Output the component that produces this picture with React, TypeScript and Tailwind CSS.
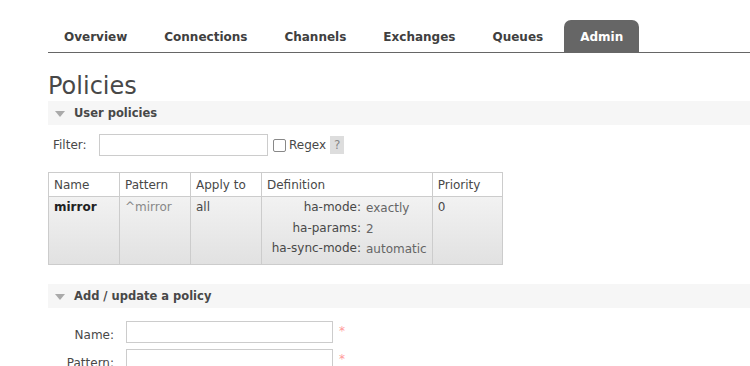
import React from 'react';

const tabs = ['Overview', 'Connections', 'Channels', 'Exchanges', 'Queues', 'Admin'];

const definition: [string, string][] = [
  ['ha-mode', 'exactly'],
  ['ha-params', '2'],
  ['ha-sync-mode', 'automatic'],
];

const SectionHeader = ({ title }: { title: string }) => (
  <div className="flex h-[24px] items-center bg-[#f6f6f6] pl-[7px] pt-[1px]">
    <span className="mr-[9px] h-0 w-0 border-x-[5px] border-t-[6px] border-x-transparent border-t-[#aaaaaa]" />
    <span className="text-[11.5px] font-bold text-[#484848]">{title}</span>
  </div>
);

const App = () => {
  return (
    <div
      className="h-[366px] w-[750px] overflow-hidden bg-white pl-[48px] text-[12px] text-[#484848]"
      style={{ fontFamily: '"DejaVu Sans", Verdana, sans-serif' }}
    >
      {/* nav */}
      <div className="mt-[20px] flex h-[33px] gap-[5px] border-b border-[#666666]">
        {tabs.map(t => (
          <div
            key={t}
            className={
              t === 'Admin'
                ? 'flex h-[32px] items-center rounded-t-[7px] bg-[#666666] px-[16px] pt-[2px] font-bold text-white'
                : 'flex h-[32px] items-center px-[16px] pt-[2px] font-bold text-[#404040]'
            }
          >
            {t}
          </div>
        ))}
      </div>

      <h1 className="mt-[19px] h-[28px] text-[24px] leading-[28px] text-[#484848]">Policies</h1>

      <div className="mt-[1px]">
        <SectionHeader title="User policies" />
      </div>

      {/* filter */}
      <div className="mt-[9px] flex h-[22px] items-center">
        <span className="ml-[5px] w-[46px]">Filter:</span>
        <input className="h-[22px] w-[169px] border border-[#cccccc] outline-none" />
        <span className="ml-[5px] h-[13px] w-[13px] rounded-[2px] border border-[#888888] bg-white" />
        <span className="ml-[3px]">Regex</span>
        <span className="ml-[4px] flex h-[18px] w-[14px] items-center justify-center bg-[#dddddd] text-[#888888]">?</span>
      </div>

      {/* table */}
      <table className="mt-[16px] border-collapse border border-[#cccccc]">
        <thead>
          <tr className="h-[24px] bg-white">
            <th className="w-[71px] border border-[#cccccc] px-[5px] text-left font-normal">Name</th>
            <th className="w-[71px] border border-[#cccccc] px-[5px] text-left font-normal">Pattern</th>
            <th className="w-[71px] border border-[#cccccc] px-[5px] text-left font-normal">Apply to</th>
            <th className="w-[169px] border border-[#cccccc] px-[5px] text-left font-normal">Definition</th>
            <th className="w-[70px] border border-[#cccccc] px-[5px] text-left font-normal">Priority</th>
          </tr>
        </thead>
        <tbody>
          <tr className="h-[68px] bg-linear-to-b from-[#f2f2f2] to-[#e1e1e1] align-top">
            <td className="border border-[#cccccc] px-[5px] pt-[1px] font-bold text-[#222222]">mirror</td>
            <td className="border border-[#cccccc] px-[5px] pt-[1px] text-[#888888]">^mirror</td>
            <td className="border border-[#cccccc] px-[5px] pt-[1px]">all</td>
            <td className="border border-[#cccccc] px-[5px] pt-0">
              <div className="flex flex-col">
                {definition.map(([k, v]) => (
                  <div key={k} className="flex h-[20.5px] items-center">
                    <span className="w-[94px] text-right">{k}:</span>
                    <span className="ml-[5px] mt-[2px] text-[#666666]">{v}</span>
                  </div>
                ))}
              </div>
            </td>
            <td className="border border-[#cccccc] px-[5px] pt-[1px]">0</td>
          </tr>
        </tbody>
      </table>

      <div className="mt-[19px]">
        <SectionHeader title="Add / update a policy" />
      </div>

      {/* form */}
      <div className="mt-[13px] flex flex-col gap-[6px]">
        {['Name:', 'Pattern:'].map(l => (
          <div key={l} className="flex h-[22px] items-start">
            <span className="w-[66px] pt-[5px] text-right leading-[18px]">{l}</span>
            <input className="ml-[12px] h-[22px] w-[207px] border border-[#cccccc] outline-none" />
            <span className="ml-[6px] pt-[1px] text-[#ff9999]">*</span>
          </div>
        ))}
      </div>
    </div>
  );
};

export default App;
